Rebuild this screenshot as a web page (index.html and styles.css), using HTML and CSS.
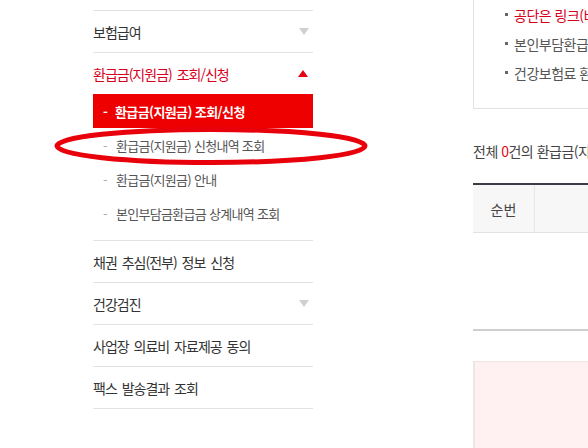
FILE: index.html
```html
<!DOCTYPE html>
<html lang="ko">
<head>
<meta charset="utf-8">
<title>환급금(지원금) 조회/신청</title>
<link rel="stylesheet" href="styles.css">
</head>
<body>
<div class="page">
  <nav class="lnb">
    <ul class="menu">
      <li class="menu-item"><span>보험급여</span><i class="tri tri-down"></i></li>
      <li class="menu-group">
        <div class="menu-item menu-item--open"><span>환급금(지원금) 조회/신청</span><i class="tri tri-up"></i></div>
        <ul class="submenu">
          <li class="sub-item sub-item--active">환급금(지원금) 조회/신청</li>
          <li class="sub-item">환급금(지원금) 신청내역 조회</li>
          <li class="sub-item">환급금(지원금) 안내</li>
          <li class="sub-item">본인부담금환급금 상계내역 조회</li>
        </ul>
      </li>
      <li class="menu-item"><span>채권 추심(전부) 정보 신청</span></li>
      <li class="menu-item"><span>건강검진</span><i class="tri tri-down"></i></li>
      <li class="menu-item"><span>사업장 의료비 자료제공 동의</span></li>
      <li class="menu-item"><span>팩스 발송결과 조회</span></li>
    </ul>
  </nav>

  <main class="content">
    <div class="notice">
      <ul class="notice-list">
        <li class="notice-red">공단은 링크(비정상적인 인터넷 주소)를 포함한 문자를 발송하지 않습니다.</li>
        <li>본인부담환급금은 진료비 본인부담 상한액 초과 시 지급됩니다.</li>
        <li>건강보험료 환급금은 과오납된 보험료를 돌려드립니다.</li>
      </ul>
    </div>

    <p class="count">전체 <em>0</em>건의 환급금(지원금) 조회 결과가 있습니다.</p>

    <table class="grid">
      <thead>
        <tr><th class="col-no">순번</th><th>환급금 종류</th><th>지급기관</th><th>환급금액</th><th>신청</th></tr>
      </thead>
      <tbody>
        <tr><td colspan="5" class="empty"></td></tr>
      </tbody>
    </table>

    <div class="pink-box"></div>
  </main>
</div>

<svg class="annot" width="588" height="448" viewBox="0 0 588 448" aria-hidden="true">
  <ellipse cx="211" cy="146" rx="154" ry="16.5" fill="none" stroke="#e8000b" stroke-width="5"/>
</svg>
</body>
</html>
```

FILE: styles.css
```css
html, body {
  margin: 0;
  padding: 0;
  overflow: hidden;
  background: #fff;
}

body {
  width: 588px;
  height: 448px;
  font-family: "Noto Sans CJK KR", "Noto Sans", sans-serif;
  color: #333;
  position: relative;
}

ul {
  list-style: none;
  margin: 0;
  padding: 0;
}

.page {
  display: flex;
  padding-left: 93px;
}

/* ---------- left navigation ---------- */
.lnb {
  flex: none;
  width: 220px;
  margin-top: 10px;
}

.menu {
  border-top: 1px solid #e2e2e2;
}

.menu > li {
  border-bottom: 1px solid #e2e2e2;
}

.menu-item {
  height: 41px;
  display: flex;
  align-items: center;
  justify-content: space-between;
  font-size: 14px;
  letter-spacing: -1px;
  word-spacing: 2px;
  color: #333;
  white-space: nowrap;
}

.menu-item--open {
  color: #d7001c;
}

.tri {
  display: block;
  width: 0;
  height: 0;
  margin-right: 4px;
  border-left: 5px solid transparent;
  border-right: 5px solid transparent;
}

.tri-down {
  border-top: 7px solid #d0d0d0;
}

.tri-up {
  margin-right: 5px;
  border-bottom: 7px solid #e60012;
}

.submenu {
  padding-bottom: 10px;
}

.sub-item {
  height: 34px;
  display: flex;
  align-items: center;
  padding-left: 10px;
  font-size: 13px;
  letter-spacing: -0.7px;
  color: #555;
  white-space: nowrap;
}

.sub-item::before {
  content: "-";
  width: 13px;
  color: #aaa;
}

.sub-item--active {
  background: #ee0000;
  color: #fff;
  font-weight: 700;
  letter-spacing: -0.6px;
}

.sub-item--active::before {
  color: #fff;
  width: 12px;
}

/* ---------- right content ---------- */
.content {
  flex: none;
  width: 720px;
  margin-left: 160px;
}

.notice {
  border: 1px solid #e2e2e2;
  border-top: none;
  padding: 0 0 21px 31px;
}

.notice-list li {
  display: flex;
  align-items: center;
  height: 29px;
  font-size: 14px;
  letter-spacing: -0.5px;
  color: #555;
  white-space: nowrap;
}

.notice-list li::before {
  content: "";
  flex: none;
  width: 3px;
  height: 3px;
  margin-right: 6px;
  background: #666;
}

.notice-list .notice-red {
  color: #d7001c;
}

.count {
  margin: 32px 0 0;
  font-size: 14px;
  letter-spacing: -0.5px;
  color: #444;
  line-height: 20px;
  white-space: nowrap;
}

.count em {
  font-style: normal;
  color: #e60012;
}

.grid {
  width: 720px;
  margin-top: 22px;
  border-collapse: collapse;
  border-top: 2px solid #3b3b48;
  border-bottom: 2px solid #cfcfcf;
}

.grid th {
  height: 45px;
  background: #f7f7f7;
  border-bottom: 1px solid #e2e2e2;
  border-left: 1px solid #e6e6e6;
  font-weight: 400;
  font-size: 14px;
  color: #444;
  text-align: center;
}

.grid th:first-child {
  border-left: none;
}

.grid .col-no {
  width: 59px;
}

.grid .empty {
  height: 94px;
}

.pink-box {
  margin-top: 30px;
  height: 120px;
  background: #fff1f1;
  border-top: 1px solid #f3e3e3;
  border-left: 2px solid #e8e8e8;
}

/* annotation overlay */
.annot {
  position: absolute;
  left: 0;
  top: 0;
  pointer-events: none;
}
```
